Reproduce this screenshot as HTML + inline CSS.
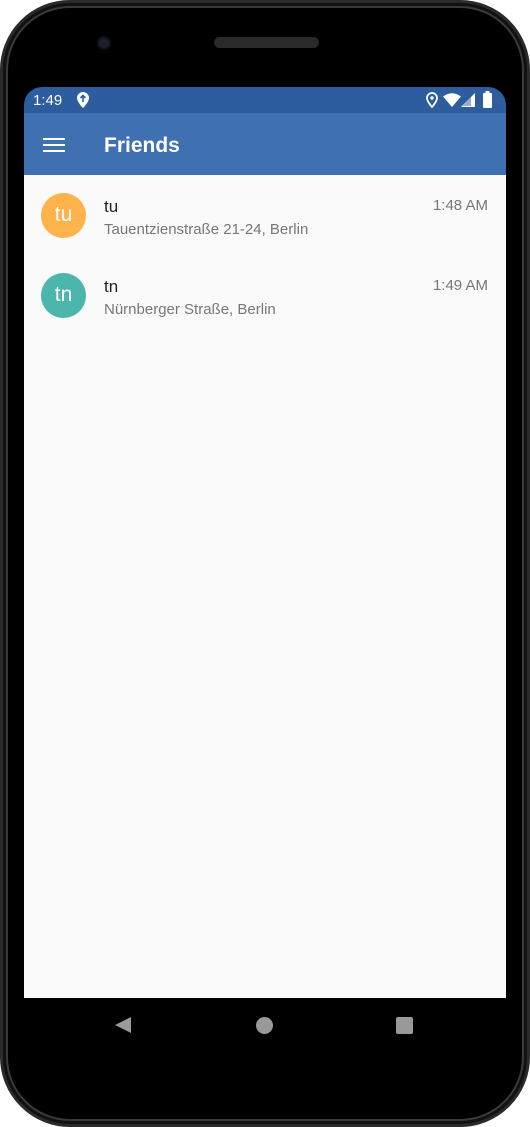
<!DOCTYPE html>
<html><head><meta charset="utf-8"><style>
*{margin:0;padding:0;box-sizing:border-box}
body{width:530px;height:1127px;background:#fff;position:relative;overflow:hidden;font-family:"Liberation Sans","DejaVu Sans",sans-serif}
.phone{position:absolute;left:0;top:0;width:530px;height:1127px;background:#000;border-radius:70px;border:3px solid #2a2a2a;box-shadow:inset 0 0 0 3px #111,inset 0 0 0 5px #3a3a3a}
.cam{position:absolute;left:97px;top:36px;width:14px;height:14px;border-radius:50%;background:#1a1f2e;border:2px solid #111}
.spk{position:absolute;left:214px;top:37px;width:105px;height:11px;border-radius:6px;background:#2a2a2a}
.screen{position:absolute;left:24px;top:87px;width:482px;height:965px;border-radius:18px 18px 8px 8px;overflow:hidden;background:#000}
.sb{position:absolute;left:0;top:0;width:482px;height:26px;background:#2d5d9e;color:#fff;font-size:15px}
.tb{position:absolute;left:0;top:26px;width:482px;height:62px;background:#3f70b2;box-shadow:0 2px 3px rgba(0,0,0,.25)}
.content{position:absolute;left:0;top:88px;width:482px;height:823px;background:#fafafa}
.nav{position:absolute;left:0;top:911px;width:482px;height:54px;background:#000}
.row{position:absolute;left:0;width:482px;height:80px}
.av{position:absolute;left:17px;width:45px;height:45px;border-radius:50%;color:#fff;font-size:21px;text-align:center;line-height:44px}
.nm{position:absolute;left:80px;font-size:17px;color:#222}
.ad{position:absolute;left:80px;font-size:15px;color:#777}
.tm{position:absolute;right:18px;font-size:15px;color:#777}
</style></head><body>
<div class="phone"></div>
<div class="cam"></div><div class="spk"></div>
<div class="screen">
 <div class="sb">
  <span style="position:absolute;left:9px;top:5px">1:49</span>
  <svg style="position:absolute;left:52px;top:4px" width="14" height="18" viewBox="0 0 14 18"><path d="M7 1a6 6 0 0 0-6 6c0 4 6 10 6 10s6-6 6-10a6 6 0 0 0-6-6z" fill="#fff"/><path d="M7 4v7M4.5 7L7 4.5 9.5 7" stroke="#2d5d9e" stroke-width="1.6" fill="none"/></svg>
  <svg style="position:absolute;left:402px;top:5px" width="12" height="16" viewBox="0 0 12 16"><path d="M6 1a5 5 0 0 0-5 5c0 3.5 5 9 5 9s5-5.5 5-9a5 5 0 0 0-5-5z" fill="none" stroke="#fff" stroke-width="1.8"/><circle cx="6" cy="6" r="1.7" fill="#fff"/></svg>
  <svg style="position:absolute;left:419px;top:6px" width="18" height="14" viewBox="0 0 18 14"><path d="M0 3.5Q9-3 18 3.5L9 14z" fill="#fff"/></svg>
  <svg style="position:absolute;left:437px;top:6px" width="14" height="14" viewBox="0 0 14 14"><path d="M14 0V14H0z" fill="#fff"/><path d="M10 4V13H1.5z" fill="#2d5d9e" opacity=".5"/></svg>
  <svg style="position:absolute;left:459px;top:4px" width="9" height="17" viewBox="0 0 9 17"><rect x="2.5" y="0" width="4" height="2" fill="#fff"/><rect x="0" y="2" width="9" height="15" rx="1" fill="#fff"/></svg>
 </div>
 <div class="tb">
  <div style="position:absolute;left:19px;top:25px;width:22px;height:2px;background:#fff;box-shadow:0 6px 0 #fff,0 12px 0 #fff"></div>
  <div style="position:absolute;left:80px;top:21px;color:#fff;font-size:21px;font-weight:bold">Friends</div>
 </div>
 <div class="content">
  <div class="row" style="top:0">
   <div class="av" style="top:18px;background:#ffb34a">tu</div>
   <div class="nm" style="top:22px">tu</div>
   <div class="ad" style="top:46px">Tauentzienstraße 21-24, Berlin</div>
   <div class="tm" style="top:22px">1:48 AM</div>
  </div>
  <div class="row" style="top:80px">
   <div class="av" style="top:18px;background:#4db6ac">tn</div>
   <div class="nm" style="top:22px">tn</div>
   <div class="ad" style="top:46px">Nürnberger Straße, Berlin</div>
   <div class="tm" style="top:22px">1:49 AM</div>
  </div>
 </div>
 <div class="nav">
  <svg style="position:absolute;left:90px;top:18px" width="18" height="18" viewBox="0 0 18 18"><path d="M17 1V17L1 9z" fill="#999"/></svg>
  <div style="position:absolute;left:232px;top:19px;width:17px;height:17px;border-radius:50%;background:#999"></div>
  <div style="position:absolute;left:372px;top:19px;width:17px;height:17px;border-radius:2px;background:#999"></div>
 </div>
</div>
</body></html>
